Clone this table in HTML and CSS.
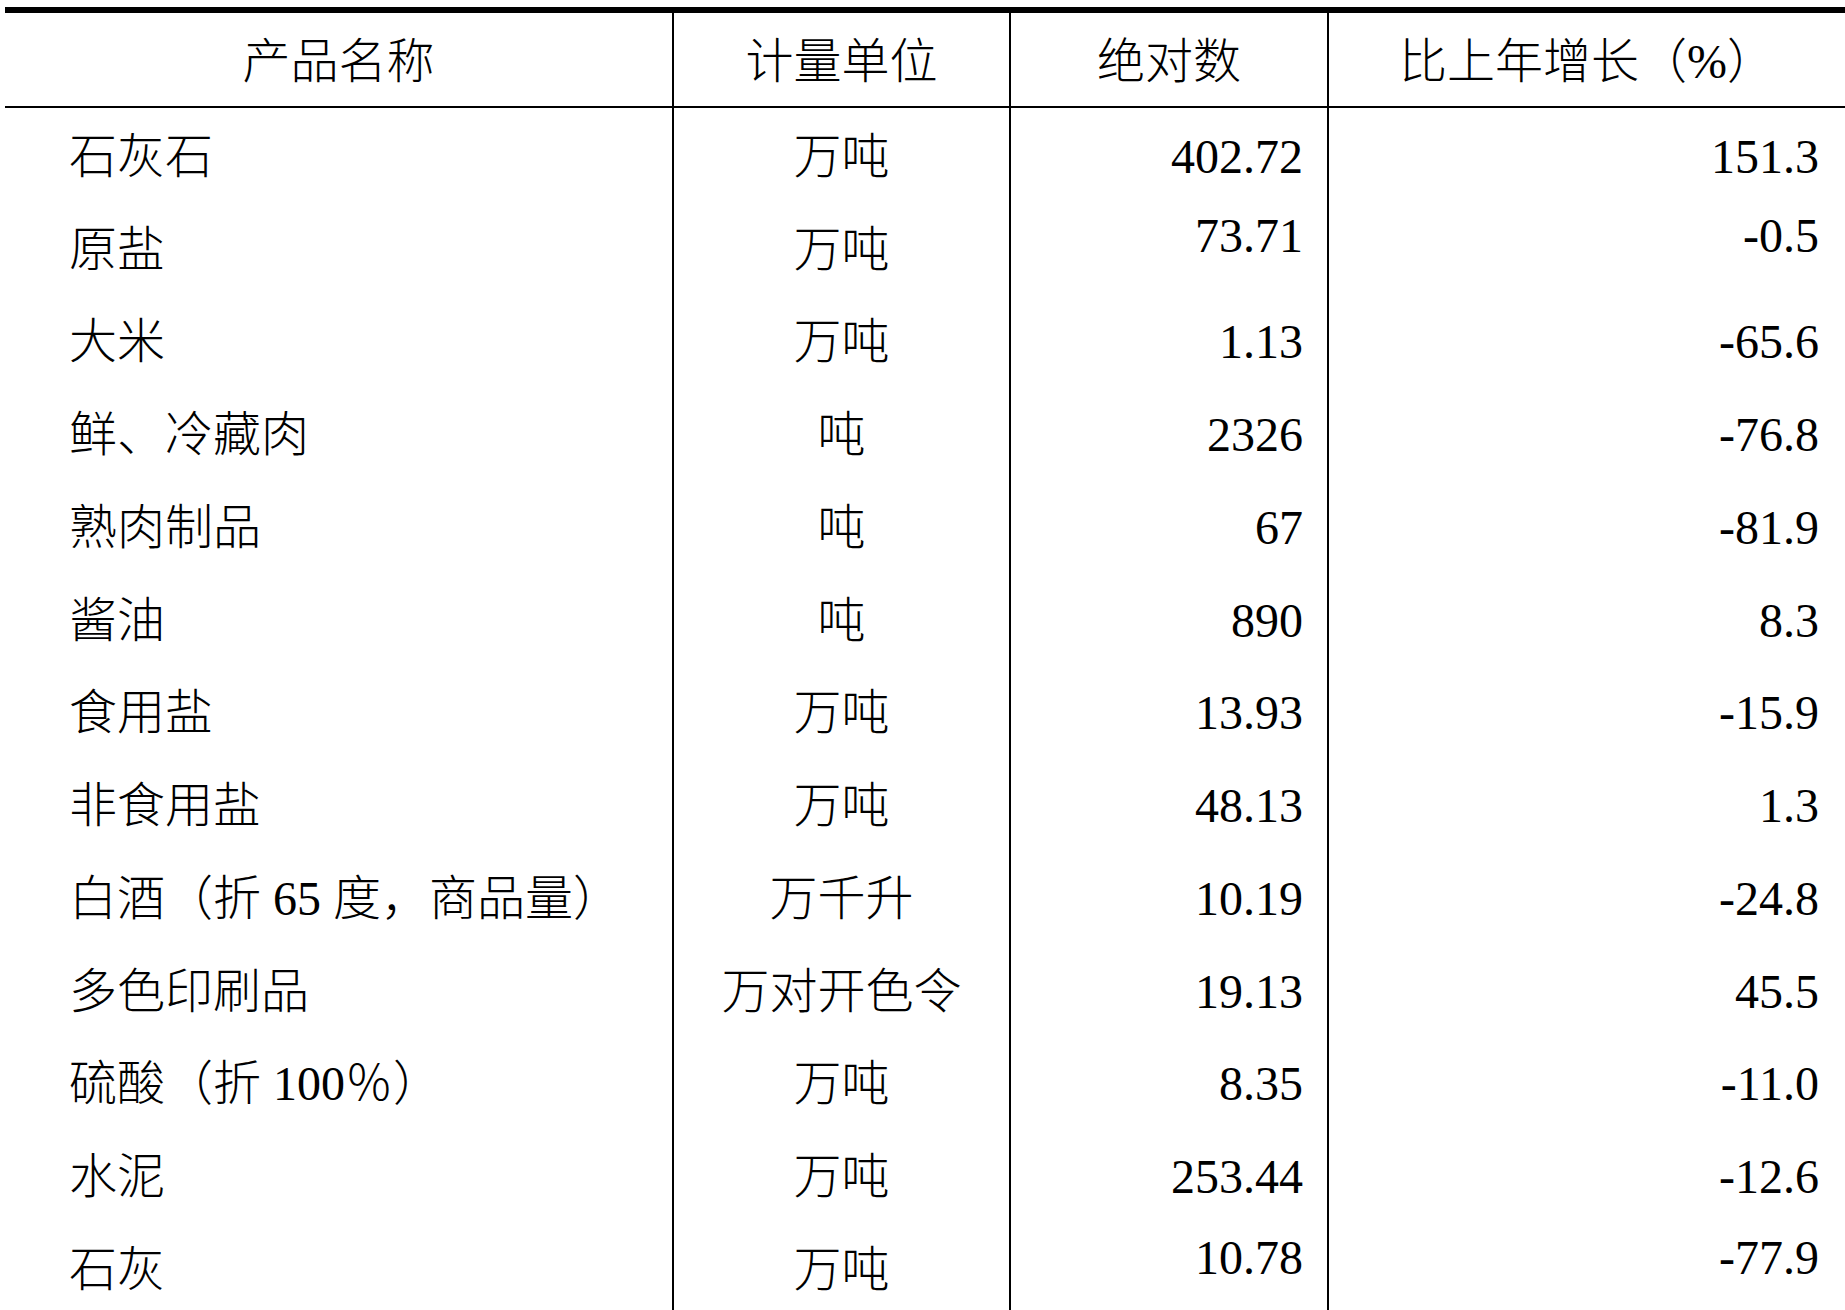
FILE: index.html
```html
<!DOCTYPE html>
<html lang="zh-CN">
<head>
<meta charset="utf-8">
<title>主要工业产品产量</title>
<link rel="stylesheet" href="styles.css">
</head>
<body>
<table class="stats">
  <colgroup>
    <col class="c-name">
    <col class="c-unit">
    <col class="c-abs">
    <col class="c-growth">
  </colgroup>
  <thead>
    <tr class="head">
      <th class="name-h">产品名称</th>
      <th class="sep">计量单位</th>
      <th class="sep">绝对数</th>
      <th class="sep">比上年增长（%）</th>
    </tr>
  </thead>
  <tbody>
    <tr class="row"><td class="name">石灰石</td><td class="sep unit">万吨</td><td class="sep num abs">402.72</td><td class="sep num growth">151.3</td></tr>
    <tr class="row"><td class="name">原盐</td><td class="sep unit">万吨</td><td class="sep num abs up14">73.71</td><td class="sep num growth up14">-0.5</td></tr>
    <tr class="row"><td class="name">大米</td><td class="sep unit">万吨</td><td class="sep num abs">1.13</td><td class="sep num growth">-65.6</td></tr>
    <tr class="row"><td class="name">鲜、冷藏肉</td><td class="sep unit">吨</td><td class="sep num abs">2326</td><td class="sep num growth">-76.8</td></tr>
    <tr class="row"><td class="name">熟肉制品</td><td class="sep unit">吨</td><td class="sep num abs">67</td><td class="sep num growth">-81.9</td></tr>
    <tr class="row"><td class="name">酱油</td><td class="sep unit">吨</td><td class="sep num abs">890</td><td class="sep num growth">8.3</td></tr>
    <tr class="row"><td class="name">食用盐</td><td class="sep unit">万吨</td><td class="sep num abs">13.93</td><td class="sep num growth">-15.9</td></tr>
    <tr class="row"><td class="name">非食用盐</td><td class="sep unit">万吨</td><td class="sep num abs">48.13</td><td class="sep num growth">1.3</td></tr>
    <tr class="row"><td class="name">白酒（折 65 度，商品量）</td><td class="sep unit">万千升</td><td class="sep num abs">10.19</td><td class="sep num growth">-24.8</td></tr>
    <tr class="row"><td class="name">多色印刷品</td><td class="sep unit">万对开色令</td><td class="sep num abs">19.13</td><td class="sep num growth">45.5</td></tr>
    <tr class="row"><td class="name">硫酸（折 100％）</td><td class="sep unit">万吨</td><td class="sep num abs">8.35</td><td class="sep num growth">-11.0</td></tr>
    <tr class="row"><td class="name">水泥</td><td class="sep unit">万吨</td><td class="sep num abs">253.44</td><td class="sep num growth">-12.6</td></tr>
    <tr class="row"><td class="name">石灰</td><td class="sep unit">万吨</td><td class="sep num abs up12">10.78</td><td class="sep num growth up12">-77.9</td></tr>
  </tbody>
</table>
</body>
</html>
```

FILE: styles.css
```css
html, body {
  margin: 0;
  padding: 0;
  background: #ffffff;
  overflow: hidden;
}

body {
  font-family: "Liberation Serif", "Noto Sans CJK SC", serif;
  font-size: 48px;
  font-weight: 300;
  color: #000000;
}

.stats {
  table-layout: fixed;
  border-collapse: separate;
  border-spacing: 0;
  width: 1840px;
  margin: 7px 0 0 5px;
  border-top: 6px solid #000000;
}

.c-name { width: 667px; }
.c-unit { width: 337px; }
.c-abs { width: 318px; }
.c-growth { width: 518px; }

.stats th,
.stats td {
  box-sizing: border-box;
  padding: 5px 0 0 0;
  line-height: 56px;
  white-space: nowrap;
  vertical-align: middle;
  font-weight: 300;
}

.head { height: 95px; }

.stats th {
  text-align: center;
  border-bottom: 2px solid #000000;
}

.row { height: 92.75px; }

.stats .sep { border-left: 2px solid #000000; }

.stats td.name {
  text-align: left;
  padding-left: 64px;
}

.stats td.unit { text-align: center; }

.stats td.num { text-align: right; }
.stats td.abs { padding-right: 24px; }
.stats td.growth { padding-right: 26px; }

.stats td.up14 { padding-bottom: 28px; }
.stats td.up12 { padding-bottom: 24px; }
```
